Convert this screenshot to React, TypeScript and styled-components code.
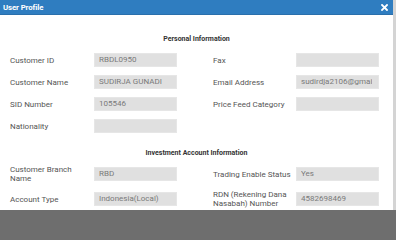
import React from "react";
import styled, { createGlobalStyle } from "styled-components";

const Global = createGlobalStyle`
  html, body { margin: 0; padding: 0; }
  body {
    width: 396px;
    height: 214px;
    overflow: hidden;
    background: #6e6e6e;
    font-family: Roboto, "Liberation Sans", Arial, sans-serif;
  }
`;

const Modal = styled.div`
  width: 393px;
  height: 210px;
  background: #ffffff;
  border-right: 3px solid #d4d4d4;
  overflow: hidden;
`;

const Header = styled.div`
  height: 15px;
  background: #2f7dc0;
  border-bottom: 1px solid #2a6fab;
  box-sizing: border-box;
  display: flex;
  align-items: center;
  justify-content: space-between;
  padding: 0 5px 0 3px;
`;

const Title = styled.span`
  color: #ffffff;
  font-weight: 700;
  font-size: 7.8px;
  letter-spacing: -0.1px;
`;

const Close = styled.button`
  border: 0;
  background: transparent;
  padding: 0;
  width: 7px;
  height: 7px;
  display: flex;
`;

const Body = styled.div`
  padding: 19px 0 0 10px;
`;

const SectionTitle = styled.div<{ $top?: number }>`
  margin: ${(p) => p.$top ?? 0}px 0 0 -10px;
  text-align: center;
  font-size: 7px;
  line-height: 10px;
  font-weight: 700;
  color: #333333;
`;

const Rows = styled.div<{ $gap: number; $top: number }>`
  display: flex;
  flex-direction: column;
  gap: ${(p) => p.$gap}px;
  margin-top: ${(p) => p.$top}px;
`;

const Row = styled.div`
  display: flex;
  gap: 36px;
`;

const Field = styled.div<{ $labelW: number }>`
  display: grid;
  grid-template-columns: ${(p) => p.$labelW}px 83px;
  align-items: center;
`;

const Label = styled.span`
  font-size: 8px;
  line-height: 9px;
  color: #555555;
  padding-right: 4px;
`;

const Value = styled.div`
  height: 14px;
  box-sizing: border-box;
  background: #e0e0e0;
  border: 1px solid #e6e6e6;
  padding: 0 6px 0 4px;
  font-size: 8px;
  line-height: 12px;
  color: #7a7a7a;
`;

const ValueText = styled.span`
  display: block;
  white-space: nowrap;
  overflow: hidden;
`;

type F = { label: string; value: string };

const personal: [F, F][] = [
  [{ label: "Customer ID", value: "RBDL0950" }, { label: "Fax", value: "" }],
  [
    { label: "Customer Name", value: "SUDIRJA GUNADI" },
    { label: "Email Address", value: "sudirdja2106@gmail.com" },
  ],
  [{ label: "SID Number", value: "105546" }, { label: "Price Feed Category", value: "" }],
];

const investment: [F, F][] = [
  [
    { label: "Customer Branch Name", value: "RBD" },
    { label: "Trading Enable Status", value: "Yes" },
  ],
  [
    { label: "Account Type", value: "Indonesia(Local)" },
    { label: "RDN (Rekening Dana Nasabah) Number", value: "4582698469" },
  ],
];

const FieldView = ({ f, w }: { f: F; w: number }) => (
  <Field $labelW={w}>
    <Label>{f.label}</Label>
    <Value>
      <ValueText>{f.value}</ValueText>
    </Value>
  </Field>
);

export default function App() {
  return (
    <>
      <Global />
      <Modal>
        <Header>
          <Title>User Profile</Title>
          <Close aria-label="close">
            <svg width="7" height="7" viewBox="0 0 7 7">
              <path d="M1 1L6 6M6 1L1 6" stroke="#fff" strokeWidth="1.8" strokeLinecap="square" />
            </svg>
          </Close>
        </Header>
        <Body>
          <SectionTitle>Personal Information</SectionTitle>
          <Rows $gap={8} $top={9}>
            {personal.map(([a, b], i) => (
              <Row key={i}>
                <FieldView f={a} w={84} />
                <FieldView f={b} w={83} />
              </Row>
            ))}
            <Row>
              <FieldView f={{ label: "Nationality", value: "" }} w={84} />
            </Row>
          </Rows>
          <SectionTitle $top={15}>Investment Account Information</SectionTitle>
          <Rows $gap={7} $top={7}>
            {investment.map(([a, b], i) => (
              <Row key={i}>
                <FieldView f={a} w={84} />
                <FieldView f={b} w={83} />
              </Row>
            ))}
          </Rows>
        </Body>
      </Modal>
    </>
  );
}
